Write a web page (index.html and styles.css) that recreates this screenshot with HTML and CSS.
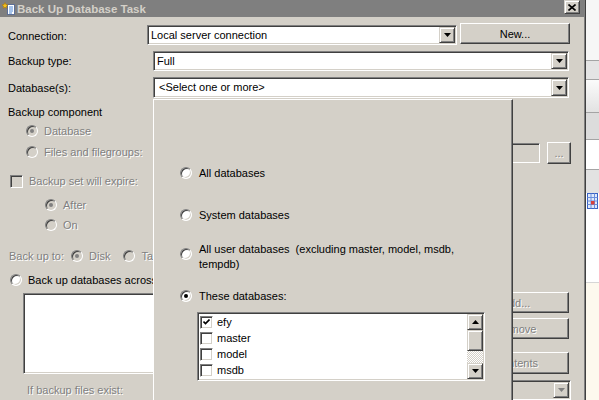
FILE: index.html
```html
<!DOCTYPE html>
<html lang="en">
<head>
    <meta charset="UTF-8">
    <title>Back Up Database Task</title>
    <link rel="stylesheet" href="styles.css">
</head>
<body>
<div class="screen">
    <div class="dialog">
        <div class="titlebar">
            <svg class="title-icon" width="14" height="14" viewBox="0 0 14 14">
                <rect x="5.5" y="2.5" width="7" height="10" fill="#fff" stroke="#5d6f96"/>
                <path d="M7 5h4M7 7h4M7 9h4M7 11h3" stroke="#4a86d6"/>
                <path d="M3 0.5l0.9 2 2.1 0.3-1.5 1.4 0.4 2.1-1.9-1-1.9 1 0.4-2.1L0 2.8l2.1-0.3z" fill="#f3c21b" stroke="#a86d00" stroke-width="0.5"/>
            </svg>
            <span class="title-text">Back Up Database Task</span>
            <span class="close-btn">
                <svg width="8" height="7" viewBox="0 0 8 7"><path d="M0.5 0.5l7 6M7.5 0.5l-7 6" stroke="#000" stroke-width="1.6"/></svg>
            </span>
        </div>

        <div class="form-row row-connection">
            <span class="row-label">Connection:</span>
            <div class="combo combo-connection">
                <span class="combo-text">Local server connection</span>
                <span class="drop-btn"><svg width="7" height="4" viewBox="0 0 7 4"><polygon points="0,0 7,0 3.5,4" fill="#000"/></svg></span>
            </div>
            <div class="btn btn-new">New...</div>
        </div>

        <div class="form-row row-type">
            <span class="row-label wide">Backup type:</span>
            <div class="combo combo-wide">
                <span class="combo-text">Full</span>
                <span class="drop-btn"><svg width="7" height="4" viewBox="0 0 7 4"><polygon points="0,0 7,0 3.5,4" fill="#000"/></svg></span>
            </div>
        </div>

        <div class="form-row row-db">
            <span class="row-label wide">Database(s):</span>
            <div class="combo combo-wide combo-db">
                <span class="combo-text">&lt;Select one or more&gt;</span>
                <span class="drop-btn"><svg width="7" height="4" viewBox="0 0 7 4"><polygon points="0,0 7,0 3.5,4" fill="#000"/></svg></span>
            </div>
        </div>

        <div class="lower">
            <div class="left-col">
                <div class="group-title">Backup component</div>
                <div class="opt opt-database"><span class="radio disabled checked"></span><span class="dis">Database</span></div>
                <div class="opt opt-files"><span class="radio disabled"></span><span class="dis">Files and filegroups:</span></div>
                <div class="opt opt-expire"><span class="check disabled"></span><span class="dis">Backup set will expire:</span></div>
                <div class="opt opt-after"><span class="radio disabled checked"></span><span class="dis">After</span></div>
                <div class="opt opt-on"><span class="radio disabled"></span><span class="dis">On</span></div>
                <div class="opt opt-backup-to">
                    <span class="dis">Back up to:</span>
                    <span class="radio disabled checked"></span><span class="dis">Disk</span>
                    <span class="radio disabled tape-radio"></span><span class="dis">Tape</span>
                </div>
                <div class="opt opt-across"><span class="radio"></span><span>Back up databases across one or more files:</span></div>
                <div class="file-box"></div>
                <div class="opt opt-exists"><span class="dis">If backup files exist:</span></div>
            </div>

            <div class="right-col">
                <div class="path-row">
                    <div class="textbox disabled"></div>
                    <div class="btn btn-browse"><span class="dis">...</span></div>
                </div>
                <div class="btn btn-side btn-add"><span class="dis">Add...</span></div>
                <div class="btn btn-side btn-remove"><span class="dis">Remove</span></div>
                <div class="btn btn-side btn-contents"><span class="dis">Contents</span></div>
                <div class="combo combo-exists disabled">
                    <span class="combo-text"></span>
                    <span class="drop-btn"><svg width="7" height="4" viewBox="0 0 7 4"><polygon points="0,0 7,0 3.5,4" fill="#808080"/></svg></span>
                </div>
            </div>

            <div class="db-popup">
                <div class="popup-opt opt-all"><span class="radio"></span><span>All databases</span></div>
                <div class="popup-opt opt-system"><span class="radio"></span><span>System databases</span></div>
                <div class="popup-opt opt-user"><span class="radio"></span><span class="two-line">All user databases&nbsp; (excluding master, model, msdb,<br>tempdb)</span></div>
                <div class="popup-opt opt-these"><span class="radio checked"></span><span>These databases:</span></div>
                <div class="db-list">
                    <div class="db-items">
                        <div class="db-item">
                            <span class="check"><svg width="7" height="7" viewBox="0 0 7 7"><path d="M0.5 2.5l2 2 4-4" fill="none" stroke="#000" stroke-width="1.6"/></svg></span>
                            <span>efy</span>
                        </div>
                        <div class="db-item"><span class="check"></span><span>master</span></div>
                        <div class="db-item"><span class="check"></span><span>model</span></div>
                        <div class="db-item"><span class="check"></span><span>msdb</span></div>
                    </div>
                    <div class="scrollbar">
                        <span class="sb-btn"><svg width="7" height="4" viewBox="0 0 7 4"><polygon points="0,4 7,4 3.5,0" fill="#000"/></svg></span>
                        <span class="sb-thumb"></span>
                        <span class="sb-track"></span>
                        <span class="sb-btn"><svg width="7" height="4" viewBox="0 0 7 4"><polygon points="0,0 7,0 3.5,4" fill="#000"/></svg></span>
                    </div>
                </div>
            </div>
        </div>
    </div>

    <div class="behind">
        <div class="band band-top"></div>
        <div class="band-line"></div>
        <div class="band band-grey1"></div>
        <div class="band-line"></div>
        <div class="band band-grad"></div>
        <div class="band-line"></div>
        <div class="band band-grey2"></div>
        <div class="band-line"></div>
        <div class="band band-white1"></div>
        <div class="band-line"></div>
        <div class="band band-grey3"></div>
        <div class="band band-icon">
            <svg width="11" height="16" viewBox="0 0 11 16">
                <rect x="0.5" y="0.5" width="10" height="15" fill="#dfe9fb" stroke="#3a62c4"/>
                <path d="M0.5 4.5h10M0.5 8h10M0.5 11.5h10M4 0.5v15M7.5 0.5v15" stroke="#6b8fdc"/>
                <rect x="4" y="8" width="3.5" height="3.5" fill="#d9403a"/>
            </svg>
        </div>
        <div class="band band-white2"></div>
        <div class="band-line light"></div>
        <div class="band band-cream"></div>
    </div>
</div>
</body>
</html>
```

FILE: styles.css
```css
body {
    margin: 0;
    background: #d4d0c8;
    font-family: "Liberation Sans", Arial, sans-serif;
    font-size: 11px;
    line-height: 14px;
    color: #000;
}
.screen {
    display: flex;
    width: 599px;
    height: 400px;
    overflow: hidden;
}
.dialog {
    width: 585px;
    flex: none;
    height: 400px;
    background: #d4d0c8;
    border-right: 1px solid #404040;
    box-shadow: inset -1px 0 0 #808080;
    overflow: hidden;
}

/* title bar */
.titlebar {
    display: flex;
    align-items: center;
    height: 17px;
    width: 584px;
    padding-left: 2px;
    box-sizing: border-box;
    background: #7f7f7f;
    color: #d4d0c8;
}
.title-icon {
    flex: none;
    margin-right: 1px;
}
.title-text {
    font-weight: bold;
    font-size: 11.5px;
}
.close-btn {
    margin-left: auto;
    margin-right: 4px;
    align-self: flex-start;
    width: 16px;
    height: 14px;
    box-sizing: border-box;
    display: flex;
    align-items: center;
    justify-content: center;
    background: #d4d0c8;
    border: 1px solid;
    border-color: #d4d0c8 #404040 #404040 #d4d0c8;
    box-shadow: inset 1px 1px 0 #fff, inset -1px -1px 0 #808080;
}

/* shared widgets */
.dis {
    color: #808080;
    text-shadow: 1px 1px 0 #fff;
}
.combo, .textbox, .db-list, .file-box {
    box-sizing: border-box;
    border: 1px solid;
    border-color: #808080 #fff #fff #808080;
    box-shadow: inset 1px 1px 0 #404040, inset -1px -1px 0 #d4d0c8;
    background: #fff;
}
.combo {
    display: flex;
    align-items: stretch;
    padding: 1px;
}
.combo.disabled, .textbox.disabled {
    background: #d4d0c8;
}
.combo-text {
    flex: 1;
    padding-left: 2px;
    line-height: 16px;
    white-space: nowrap;
}
.drop-btn, .sb-btn, .sb-thumb {
    box-sizing: border-box;
    width: 16px;
    display: flex;
    align-items: center;
    justify-content: center;
    background: #d4d0c8;
    border: 1px solid;
    border-color: #d4d0c8 #404040 #404040 #d4d0c8;
    box-shadow: inset 1px 1px 0 #fff, inset -1px -1px 0 #808080;
}
.btn {
    box-sizing: border-box;
    display: flex;
    align-items: center;
    justify-content: center;
    background: #d4d0c8;
    border: 1px solid;
    border-color: #fff #404040 #404040 #fff;
    box-shadow: inset -1px -1px 0 #808080;
}
.radio {
    position: relative;
    flex: none;
    width: 12px;
    height: 12px;
    box-sizing: border-box;
    border-radius: 50%;
    border: 1px solid;
    border-color: #808080 #fff #fff #808080;
    box-shadow: inset 1px 1px 0 #404040, inset -1px -1px 0 #d4d0c8;
    background: #fff;
}
.radio.disabled {
    background: #d4d0c8;
}
.radio.checked::after {
    content: "";
    position: absolute;
    left: 3px;
    top: 3px;
    width: 4px;
    height: 4px;
    border-radius: 50%;
    background: #000;
}
.radio.disabled.checked::after {
    background: #808080;
}
.check {
    flex: none;
    width: 13px;
    height: 13px;
    box-sizing: border-box;
    display: flex;
    align-items: center;
    justify-content: center;
    border: 1px solid;
    border-color: #808080 #fff #fff #808080;
    box-shadow: inset 1px 1px 0 #404040, inset -1px -1px 0 #d4d0c8;
    background: #fff;
}
.check.disabled {
    background: #d4d0c8;
}

/* top form rows */
.form-row {
    display: flex;
    align-items: flex-start;
    padding-left: 8px;
}
.row-label {
    width: 139px;
    flex: none;
}
.row-label.wide {
    width: 145px;
}
.row-connection {
    margin-top: 6px;
    height: 22px;
}
.row-connection .row-label {
    margin-top: 6px;
}
.combo-connection {
    width: 310px;
    height: 20px;
    margin-top: 2px;
}
.btn-new {
    width: 110px;
    height: 21px;
    margin-left: 3px;
}
.row-type {
    margin-top: 6px;
    height: 20px;
}
.row-type .row-label {
    margin-top: 3px;
}
.combo-wide {
    width: 416px;
    height: 20px;
}
.row-db {
    margin-top: 6px;
    height: 21px;
}
.row-db .row-label {
    margin-top: 4px;
}
.combo-db {
    height: 21px;
}
.combo-db .combo-text {
    padding-left: 4px;
    line-height: 17px;
}

/* area under the combos */
.lower {
    position: relative;
    display: flex;
    justify-content: space-between;
    height: 302px;
}
.left-col {
    padding-left: 8px;
}
.opt {
    display: flex;
    align-items: center;
    gap: 6px;
    height: 14px;
    white-space: nowrap;
}
.group-title {
    margin-top: 7px;
}
.opt-database {
    margin-top: 5px;
    padding-left: 18px;
}
.opt-files {
    margin-top: 7px;
    padding-left: 18px;
}
.opt-expire {
    margin-top: 15px;
    padding-left: 2px;
}
.opt-after {
    margin-top: 10px;
    padding-left: 37px;
}
.opt-on {
    margin-top: 6px;
    padding-left: 37px;
}
.opt-backup-to {
    margin-top: 17px;
    padding-left: 1px;
}
.opt-backup-to .radio {
    margin-left: 1px;
}
.opt-backup-to .tape-radio {
    margin-left: 7px;
}
.opt-across {
    margin-top: 10px;
    padding-left: 2px;
}
.file-box {
    margin-top: 6px;
    margin-left: 15px;
    width: 440px;
    height: 81px;
}
.opt-exists {
    margin-top: 9px;
    padding-left: 19px;
}

.right-col {
    width: 110px;
    margin-right: 14px;
    display: flex;
    flex-direction: column;
}
.path-row {
    display: flex;
    gap: 7px;
    margin-top: 44px;
    height: 22px;
}
.textbox {
    flex: 1;
    height: 20px;
    margin-top: 1px;
}
.btn-browse {
    width: 24px;
    height: 22px;
}
.btn-side {
    width: 106px;
    height: 22px;
}
.btn-add {
    margin-top: 128px;
}
.btn-remove {
    margin-top: 5px;
}
.btn-contents {
    margin-top: 13px;
}
.combo-exists {
    margin-top: 6px;
    width: 108px;
    height: 21px;
}

/* open drop-down of the Database(s) combo */
.db-popup {
    position: absolute;
    left: 153px;
    top: 1px;
    width: 360px;
    height: 320px;
    box-sizing: border-box;
    padding-left: 26px;
    background: #d4d0c8;
    border-left: 1px solid #fff;
    border-top: 1px solid #fff;
    border-right: 1px solid #404040;
    box-shadow: inset -1px 0 0 #808080;
}
.popup-opt {
    display: flex;
    align-items: center;
    gap: 7px;
    white-space: nowrap;
}
.opt-all {
    margin-top: 66px;
}
.opt-system {
    margin-top: 28px;
}
.opt-user {
    margin-top: 20px;
    align-items: flex-start;
    line-height: 15px;
}
.opt-user .radio {
    margin-top: 6px;
}
.opt-these {
    margin-top: 17px;
}
.db-list {
    display: flex;
    margin-top: 9px;
    margin-left: 17px;
    width: 288px;
    height: 69px;
    padding: 1px;
}
.db-items {
    flex: 1;
}
.db-item {
    display: flex;
    align-items: center;
    gap: 4px;
    height: 16px;
    padding-left: 1px;
}
.scrollbar {
    width: 16px;
    display: flex;
    flex-direction: column;
}
.sb-btn {
    height: 16px;
}
.sb-thumb {
    height: 21px;
}
.sb-track {
    flex: 1;
    background-color: #fff;
    background-image: conic-gradient(#d4d0c8 25%, transparent 0 50%, #d4d0c8 0 75%, transparent 0);
    background-size: 2px 2px;
}

/* window behind the dialog */
.behind {
    flex: 1;
    display: flex;
    flex-direction: column;
}
.band-line {
    height: 1px;
    background: #a4a4a4;
}
.band-line.light {
    background: #d6d6d6;
}
.band-top {
    height: 60px;
    background: #f6f6f6;
}
.band-grey1 {
    height: 18px;
    background: #e4e4e4;
}
.band-grad {
    height: 32px;
    background: linear-gradient(#fbfbfb, #e2e2e2);
}
.band-grey2 {
    height: 26px;
    background: #dcdcdc;
}
.band-white1 {
    height: 29px;
    background: #fff;
}
.band-grey3 {
    height: 23px;
    background: #e2e2e2;
}
.band-icon {
    height: 17px;
    background: #fff;
    padding-left: 1px;
}
.band-white2 {
    height: 72px;
    background: #fff;
}
.band-cream {
    flex: 1;
    background: #fdf9ee;
}
```
